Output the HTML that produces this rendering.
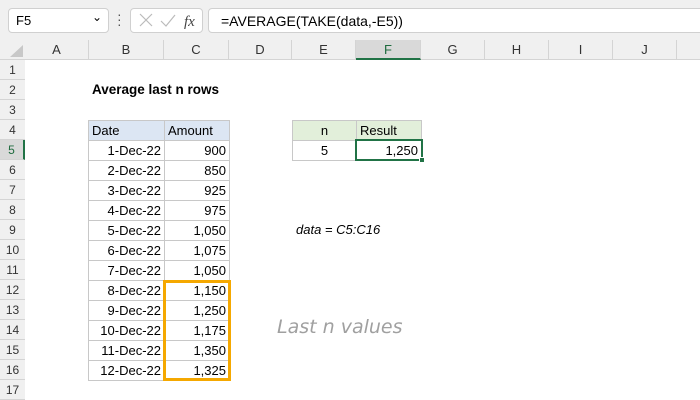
<!DOCTYPE html>
<html><head><style>
body{margin:0;width:700px;height:400px;overflow:hidden;background:#fff;font-family:"Liberation Sans",sans-serif;font-size:13px;color:#000;position:relative}
.a{position:absolute;box-sizing:border-box}
.ch{position:absolute;top:40px;height:20px;line-height:20px;text-align:center;color:#333;font-size:13px;border-right:1px solid #d4d4d4;box-sizing:border-box}
.rh{position:absolute;left:0;width:25px;height:20px;line-height:20px;text-align:center;color:#333;font-size:12px;border-bottom:1px solid #d4d4d4;background:#f0f0f0;box-sizing:border-box}
.c{position:absolute;height:21px;line-height:19px;box-sizing:border-box;padding:0 3px;white-space:nowrap;border:1px solid #c8c8c8}
.r{text-align:right}
.t{position:absolute;height:20px;line-height:20px;white-space:nowrap}
</style></head><body>
<div class="a" style="left:0;top:0;width:700px;height:40px;background:#f0f0f0"></div>
<div class="a" style="left:8px;top:8px;width:101px;height:25px;background:#fff;border:1px solid #d0d0d0;border-radius:4px;padding:4px 7px;font-size:13px">F5<span style="position:absolute;right:6px;top:1px;font-size:12px">&#8964;</span></div>
<div class="a" style="left:117px;top:12px;width:3px;height:16px;color:#555;font-size:14px;line-height:5px">·<br>·<br>·</div>
<div class="a" style="left:130px;top:8px;width:73px;height:25px;background:#fff;border:1px solid #d0d0d0;border-radius:4px"></div>
<svg class="a" style="left:130px;top:8px" width="73" height="25"><path d="M10 6l12 12M22 6l-12 12" stroke="#bbb" stroke-width="1.2" fill="none"/><path d="M31 13l5 5 9-11" stroke="#bbb" stroke-width="1.2" fill="none"/><text x="54" y="18" font-family="Liberation Serif" font-style="italic" font-size="15" fill="#444">fx</text></svg>
<div class="a" style="left:208px;top:8px;width:500px;height:25px;background:#fff;border:1px solid #d0d0d0;border-radius:4px;padding:4px 12px;font-size:14px">=AVERAGE(TAKE(data,-E5))</div>
<div class="a" style="left:0;top:40px;width:700px;height:20px;background:#f0f0f0;border-bottom:1px solid #d4d4d4"></div>
<svg class="a" style="left:8px;top:44px" width="16" height="14"><path d="M15 1V13H2Z" fill="#c8c8c8"/></svg>
<div class="ch" style="left:25px;width:64px">A</div>
<div class="ch" style="left:89px;width:75px">B</div>
<div class="ch" style="left:164px;width:65px">C</div>
<div class="ch" style="left:229px;width:63px">D</div>
<div class="ch" style="left:292px;width:64px">E</div>
<div class="ch" style="left:356px;width:65px;background:#d9d9d9;border-bottom:2px solid #217346;color:#1e6b3e">F</div>
<div class="ch" style="left:421px;width:64px">G</div>
<div class="ch" style="left:485px;width:64px">H</div>
<div class="ch" style="left:549px;width:64px">I</div>
<div class="ch" style="left:613px;width:64px">J</div>
<div class="a" style="left:0;top:60px;width:25px;height:340px;background:#f0f0f0;border-right:1px solid #d4d4d4"></div>
<div class="rh" style="top:60px">1</div><div class="rh" style="top:80px">2</div><div class="rh" style="top:100px">3</div><div class="rh" style="top:120px">4</div><div class="rh" style="top:140px;background:#d9d9d9;color:#1e6b3e;border-right:2px solid #217346">5</div><div class="rh" style="top:160px">6</div><div class="rh" style="top:180px">7</div><div class="rh" style="top:200px">8</div><div class="rh" style="top:220px">9</div><div class="rh" style="top:240px">10</div><div class="rh" style="top:260px">11</div><div class="rh" style="top:280px">12</div><div class="rh" style="top:300px">13</div><div class="rh" style="top:320px">14</div><div class="rh" style="top:340px">15</div><div class="rh" style="top:360px">16</div><div class="rh" style="top:380px">17</div>
<div class="t" style="left:92px;top:80px;font-weight:bold;font-size:13.5px">Average last n rows</div>

<div class="c" style="left:88px;top:120px;width:77px;background:#dce6f3">Date</div>
<div class="c" style="left:164px;top:120px;width:66px;background:#dce6f3">Amount</div>
<div class="c r" style="left:88px;top:140px;width:77px">1-Dec-22</div><div class="c r" style="left:164px;top:140px;width:66px">900</div>
<div class="c r" style="left:88px;top:160px;width:77px">2-Dec-22</div><div class="c r" style="left:164px;top:160px;width:66px">850</div>
<div class="c r" style="left:88px;top:180px;width:77px">3-Dec-22</div><div class="c r" style="left:164px;top:180px;width:66px">925</div>
<div class="c r" style="left:88px;top:200px;width:77px">4-Dec-22</div><div class="c r" style="left:164px;top:200px;width:66px">975</div>
<div class="c r" style="left:88px;top:220px;width:77px">5-Dec-22</div><div class="c r" style="left:164px;top:220px;width:66px">1,050</div>
<div class="c r" style="left:88px;top:240px;width:77px">6-Dec-22</div><div class="c r" style="left:164px;top:240px;width:66px">1,075</div>
<div class="c r" style="left:88px;top:260px;width:77px">7-Dec-22</div><div class="c r" style="left:164px;top:260px;width:66px">1,050</div>
<div class="c r" style="left:88px;top:280px;width:77px">8-Dec-22</div><div class="c r" style="left:164px;top:280px;width:66px">1,150</div>
<div class="c r" style="left:88px;top:300px;width:77px">9-Dec-22</div><div class="c r" style="left:164px;top:300px;width:66px">1,250</div>
<div class="c r" style="left:88px;top:320px;width:77px">10-Dec-22</div><div class="c r" style="left:164px;top:320px;width:66px">1,175</div>
<div class="c r" style="left:88px;top:340px;width:77px">11-Dec-22</div><div class="c r" style="left:164px;top:340px;width:66px">1,350</div>
<div class="c r" style="left:88px;top:360px;width:77px">12-Dec-22</div><div class="c r" style="left:164px;top:360px;width:66px">1,325</div>
<div class="a" style="left:163px;top:280px;width:68px;height:101px;border:3px solid #f5a800"></div>

<div class="c" style="left:292px;top:120px;width:65px;background:#e2efda;text-align:center">n</div>
<div class="c" style="left:356px;top:120px;width:66px;background:#e2efda">Result</div>
<div class="c" style="left:292px;top:140px;width:65px;text-align:center">5</div>
<div class="c r" style="left:356px;top:140px;width:66px">1,250</div>
<div class="a" style="left:355px;top:139px;width:68px;height:22px;border:2px solid #217346"></div>
<div class="a" style="left:419px;top:157px;width:6px;height:6px;background:#217346;border:1px solid #fff"></div>
<div class="t" style="left:296px;top:220px;font-style:italic">data = C5:C16</div>
<div class="a" style="left:277px;top:316px;font-size:19px;color:#a0a0a0;font-family:'DejaVu Sans',sans-serif;font-style:italic;font-weight:200">Last n values</div>
</body></html>
